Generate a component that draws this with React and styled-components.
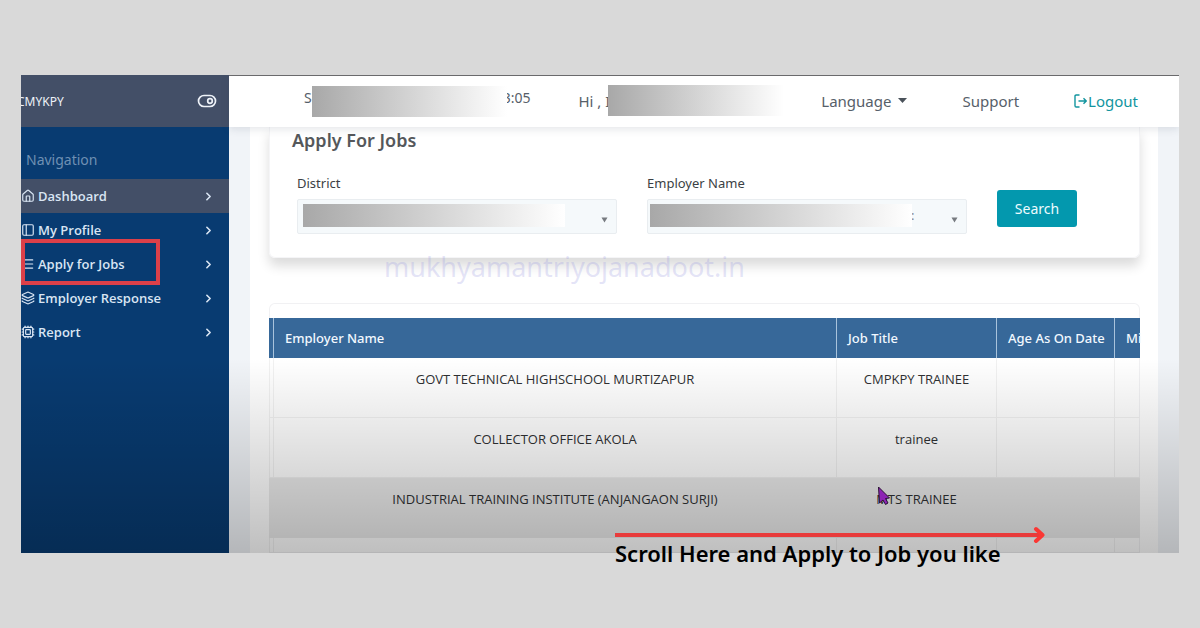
import React from "react";
import styled, { createGlobalStyle } from "styled-components";
import { House, PanelLeft, Menu, Layers, Cpu, ChevronRight } from "lucide-react";

const Global = createGlobalStyle`
  * { box-sizing: border-box; }
  body { margin: 0; background: #d9d9d9; font-family: "Noto Sans", "Open Sans", sans-serif; color: #3b3f44; }
  a { color: inherit; text-decoration: none; }
`;

const Page = styled.div`
  padding: 75px 21px;
`;

const Stage = styled.div`
  position: relative;
`;

const Frame = styled.div`
  position: relative;
  display: grid;
  grid-template-columns: 208px 1fr;
  overflow: hidden;
  background: #f1f4f8;

  &::after {
    content: "";
    position: absolute;
    inset: auto 0 0 0;
    height: 195px;
    background: linear-gradient(rgba(0, 0, 0, 0), rgba(0, 0, 0, 0.25));
    pointer-events: none;
  }
`;

const Sidebar = styled.aside`
  background: #083b71;
  color: #d9e5f3;
`;

const Brand = styled.div`
  display: flex;
  align-items: center;
  justify-content: space-between;
  height: 52px;
  margin-left: -4px;
  padding-right: 12px;
  background: #434f67;
  font-size: 12px;
  color: #eef2f8;
`;

const ToggleButton = styled.button`
  display: flex;
  padding: 0;
  border: 0;
  background: none;
  color: inherit;
`;

const NavTitle = styled.div`
  padding: 22px 5px 8px;
  font-size: 14px;
  line-height: 22px;
  color: #6f90b3;
`;

const NavItem = styled.a`
  display: flex;
  align-items: center;
  gap: 3px;
  height: 34px;
  padding: 0 14px 0 0;
  background: ${(p) => (p.$active ? "#434f67" : "transparent")};
  font-family: "Open Sans", "Noto Sans", sans-serif;
  font-size: 13px;
  font-weight: 600;

  svg:last-child { margin-left: auto; }
`;

const Main = styled.div`
  min-width: 0;
`;

const Header = styled.header`
  position: relative;
  z-index: 1;
  display: flex;
  align-items: center;
  justify-content: space-between;
  height: 52px;
  padding: 0 41px 2px 75px;
  border-top: 1px solid #6a6a6c;
  background: #fff;
  box-shadow: 0 2px 8px rgba(60, 70, 90, 0.14);
  font-size: 15px;
  color: #566069;
`;

const HeaderGroup = styled.div`
  display: flex;
  align-items: center;
  gap: ${(p) => p.$gap}px;
`;

const Stamp = styled.div`
  display: flex;
  align-items: center;
  font-size: ${(p) => (p.$small ? 14 : 15)}px;
  padding-bottom: ${(p) => (p.$small ? 6 : 0)}px;
  white-space: pre;
`;

const Mask = styled.span`
  position: relative;
  width: ${(p) => p.$width}px;
  height: 31px;
  margin: ${(p) => (p.$overlap ? "4px -4px -4px 0" : "0 0 0 -2px")};
  background: linear-gradient(90deg, #a8a8a8, #fff);
`;

const LanguageButton = styled.button`
  display: flex;
  align-items: center;
  gap: 7px;
  padding: 0;
  border: 0;
  background: none;
  font: inherit;
  color: inherit;
`;

const HeaderLink = styled.a`
  display: flex;
  align-items: center;
  gap: 1px;
  color: ${(p) => (p.$accent ? "#12959f" : "inherit")};
`;

const Content = styled.main`
  margin: 0 21px;
  padding: 0 18px 0 19px;
  background: #fff;
`;

const SearchCard = styled.section`
  height: 131px;
  padding: 1px 0 0;
  border: 1px solid #f5f5f7;
  border-top: 0;
  border-radius: 0 0 6px 6px;
  box-shadow: 0 8px 12px rgba(0, 0, 0, 0.14);
`;

const Title = styled.h1`
  margin: 0;
  padding-left: 22px;
  font-size: 18px;
  font-weight: 600;
  line-height: 24px;
  color: #55585b;
`;

const Form = styled.form`
  display: grid;
  grid-template-columns: 1fr 1fr 142px;
  column-gap: 30px;
  padding: 20px 0 0 27px;
`;

const Field = styled.div`
  display: flex;
  flex-direction: column;
  gap: 5px;
`;

const Label = styled.label`
  font-size: 13px;
  line-height: 22px;
`;

const SelectBox = styled.div`
  position: relative;

  svg { position: absolute; right: 9px; top: 18px; }
`;

const Select = styled.select`
  appearance: none;
  display: block;
  width: 100%;
  height: 35px;
  padding: 0 20px 4px 263px;
  border: 1px solid #e9edf0;
  border-radius: 2px;
  background: #f5f9fb;
  font: 13px "Noto Sans", sans-serif;
  color: #7c8690;
`;

const SelectMask = styled.span`
  position: absolute;
  left: ${(p) => p.$left}px;
  top: 5px;
  width: 262px;
  height: 23px;
  background: linear-gradient(90deg, #a8a8a8, #fff);
`;

const SearchButton = styled.button`
  width: 80px;
  height: 37px;
  margin-top: 18px;
  border: 0;
  border-radius: 3px;
  background: #0398ae;
  font: 14px "Noto Sans", sans-serif;
  color: #eefcff;
`;

const TableCard = styled.section`
  margin-top: 45px;
  padding-top: 15px;
  border-radius: 6px 6px 0 0;
  box-shadow: inset 0 0 0 1px #f1f1f3;
`;

const Table = styled.table`
  width: 100%;
  table-layout: fixed;
  border-collapse: separate;
  border-spacing: 0;
  font-family: "Open Sans", "Noto Sans", sans-serif;
  font-size: 13px;
  color: #2f3133;
`;

const HeadCell = styled.th`
  width: ${(p) => p.$width};
  height: 40px;
  padding: 0 0 0 11px;
  border-left: ${(p) => (p.$first ? "0" : "1px solid #a9c3dc")};
  background: #376899;
  font-family: "Noto Sans", sans-serif;
  font-weight: 500;
  text-align: left;
  white-space: nowrap;
  color: #f2f8ff;

  &:first-child { padding: 0; }
`;

const Row = styled.tr`
  height: ${(p) => (p.$last ? 15 : 60)}px;
  background: ${(p) => (p.$selected ? "#ebebeb" : "transparent")};

  td { border-color: ${(p) => (p.$selected ? "transparent" : "#f1f1f1")}; }
`;

const Cell = styled.td`
  padding: ${(p) => (p.$last ? "0" : "10px 0 0")};
  border-left: 1px solid;
  border-bottom: ${(p) => (p.$last ? "0" : "1px solid")};
  line-height: 22px;
  text-align: center;
  vertical-align: top;
`;

const Watermark = styled.div`
  position: absolute;
  left: 363px;
  top: 176px;
  font: 400 27px/32px "Noto Sans", sans-serif;
  color: rgba(150, 150, 225, 0.26);
`;

const Highlight = styled.div`
  position: absolute;
  left: 0;
  top: 164px;
  width: 139px;
  height: 46px;
  border: 4px solid #dc4049;
`;

const ScrollNote = styled.div`
  position: absolute;
  left: 594px;
  top: 451px;
  font: 600 22px/20px "Noto Sans", sans-serif;
  color: #000;
  white-space: nowrap;

  svg { display: block; }
`;

const Pointer = styled.svg`
  position: absolute;
  left: 856px;
  top: 411px;
`;

const navItems = [
  { label: "Dashboard", Icon: House, active: true },
  { label: "My Profile", Icon: PanelLeft },
  { label: "Apply for Jobs", Icon: Menu },
  { label: "Employer Response", Icon: Layers },
  { label: "Report", Icon: Cpu },
];

const jobs = [
  { employer: "GOVT TECHNICAL HIGHSCHOOL MURTIZAPUR", title: "CMPKPY TRAINEE" },
  { employer: "COLLECTOR OFFICE AKOLA", title: "trainee" },
  { employer: "INDUSTRIAL TRAINING INSTITUTE (ANJANGAON SURJI)", title: "MTS TRAINEE", selected: true },
  { employer: "", title: "", last: true },
];

function SelectField({ id, label, maskLeft, value }) {
  return (
    <Field>
      <Label htmlFor={id}>{label}</Label>
      <SelectBox>
        <Select id={id}>
          <option>{value}</option>
        </Select>
        <SelectMask $left={maskLeft} />
        <svg width="7" height="6" viewBox="0 0 7 6" aria-hidden="true">
          <path d="M0.5 0.5h6L3.5 5.5z" fill="#777b80" />
        </svg>
      </SelectBox>
    </Field>
  );
}

export default function App() {
  return (
    <Page>
      <Global />
      <Stage>
        <Frame>
          <Sidebar>
            <Brand>
              <span>CMYKPY</span>
              <ToggleButton aria-label="Toggle sidebar">
                <svg width="20" height="14" viewBox="0 0 20 14" fill="none" stroke="currentColor" strokeWidth="1.7">
                  <rect x="1.5" y="1.5" width="17" height="11" rx="5.5" />
                  <circle cx="13" cy="7" r="2.3" />
                </svg>
              </ToggleButton>
            </Brand>
            <NavTitle>Navigation</NavTitle>
            <nav>
              {navItems.map(({ label, Icon, active }) => (
                <NavItem key={label} href="#" $active={active}>
                  <Icon size={14} />
                  {label}
                  <ChevronRight size={13} strokeWidth={3} />
                </NavItem>
              ))}
            </nav>
          </Sidebar>
          <Main>
            <Header>
              <HeaderGroup $gap={48}>
                <Stamp $small>
                  S<Mask $width={195} $overlap />3:05
                </Stamp>
                <Stamp>
                  Hi , I<Mask $width={176} />
                </Stamp>
              </HeaderGroup>
              <HeaderGroup $gap={55}>
                <LanguageButton>
                  Language
                  <svg width="9" height="5" viewBox="0 0 9 5" aria-hidden="true">
                    <path d="M0 0h9L4.5 5z" fill="#4a525a" />
                  </svg>
                </LanguageButton>
                <HeaderLink href="#">Support</HeaderLink>
                <HeaderLink href="#" $accent>
                  <svg width="13" height="14" viewBox="0 0 13 14" fill="none" stroke="currentColor" strokeWidth="1.4" aria-hidden="true">
                    <path d="M5.5 1H2.2Q1 1 1 2.2v9.6Q1 13 2.2 13h3.3M4.5 7H12M9.5 4.3 12.2 7 9.5 9.7" />
                  </svg>
                  Logout
                </HeaderLink>
              </HeaderGroup>
            </Header>
            <Content>
              <SearchCard>
                <Title>Apply For Jobs</Title>
                <Form onSubmit={(e) => e.preventDefault()}>
                  <SelectField id="district" label="District" maskLeft={6} value="" />
                  <SelectField id="employer" label="Employer Name" maskLeft={3} value=":" />
                  <SearchButton>Search</SearchButton>
                </Form>
              </SearchCard>
              <TableCard>
                <Table>
                  <thead>
                    <tr>
                      <HeadCell $width="4px" $first />
                      <HeadCell $width="auto">Employer Name</HeadCell>
                      <HeadCell $width="160px">Job Title</HeadCell>
                      <HeadCell $width="118px">Age As On Date</HeadCell>
                      <HeadCell $width="26px">Mi</HeadCell>
                    </tr>
                  </thead>
                  <tbody>
                    {jobs.map((job) => (
                      <Row key={job.employer} $selected={job.selected} $last={job.last}>
                        <Cell $last={job.last} />
                        <Cell $last={job.last}>{job.employer}</Cell>
                        <Cell $last={job.last}>{job.title}</Cell>
                        <Cell $last={job.last} />
                        <Cell $last={job.last} />
                      </Row>
                    ))}
                  </tbody>
                </Table>
              </TableCard>
            </Content>
          </Main>
        </Frame>
        <Watermark>mukhyamantriyojanadoot.in</Watermark>
        <Highlight />
        <Pointer width="14" height="20" viewBox="0 0 14 20" aria-hidden="true">
          <path d="M1.5 1 12.5 12 8.5 12.5 11 17 8.5 18.5 6 14 2.5 17z" fill="#8d24b4" stroke="#2c1036" strokeWidth="1" />
        </Pointer>
        <ScrollNote>
          <svg width="431" height="17" viewBox="0 0 431 17" fill="none" stroke="#e83b3b" strokeWidth="4" aria-hidden="true">
            <path d="M0 9H426" />
            <path d="M421 3 427.500 9 421 15" stroke="#fa3734" strokeLinecap="round" strokeLinejoin="round" />
          </svg>
          Scroll Here and Apply to Job you like
        </ScrollNote>
      </Stage>
    </Page>
  );
}
